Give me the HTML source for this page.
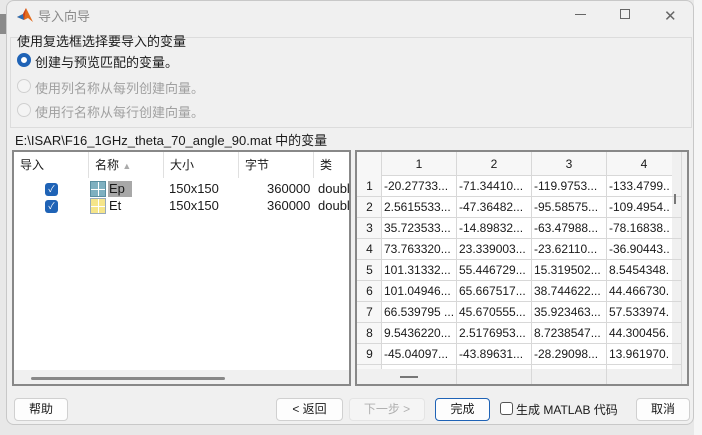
<!DOCTYPE html>
<html><head><meta charset="utf-8"><style>
*{box-sizing:border-box;margin:0;padding:0}
body{width:702px;height:435px;overflow:hidden;background:#e8e8e8;font-family:"Liberation Sans","Noto Sans CJK SC",sans-serif;font-size:12px;color:#1a1a1a;position:relative}
.a{position:absolute}
.win{left:6px;top:0;width:688px;height:425px;background:#f0f0f0;border:1px solid #c8c8c8;border-radius:8px}
.btn{position:absolute;top:398px;height:23px;background:#fdfdfd;border:1px solid #d0d0d0;border-radius:4px;text-align:center;line-height:21px;font-size:12px}
.th{position:absolute;top:0;height:26px;line-height:26px;border-right:1px solid #e0e0e0;padding-left:6px}
.cell{position:absolute;height:21px;line-height:20px;border-right:1px solid #d8d8d8;border-bottom:1px solid #d8d8d8;padding-left:2px;white-space:nowrap;overflow:hidden;font-size:12px}
.cb{position:absolute;width:13px;height:13px;background:#1f63b6;border-radius:3px;color:#fff;font-size:9px;text-align:center;line-height:13px}
.radio{position:absolute;left:17px;width:14px;height:14px;border-radius:50%;border:1px solid #d0d0d0;background:#f4f4f4}
.grid{background-image:linear-gradient(#fff,#fff),linear-gradient(#fff,#fff);background-size:1px 100%,100% 1px;background-position:7px 0,0 7px;background-repeat:no-repeat}
</style></head><body>
<div class="a" style="left:0;top:14px;width:6px;height:20px;background:#8a8a8a"></div>
<div class="a" style="left:694px;top:0;width:8px;height:435px;background:#f6f6f6"></div>
<div class="a win"></div>
<svg class="a" style="left:16px;top:6px" width="18" height="18" viewBox="0 0 18 18"><path d="M1 11 L7 8 L10 2 L17 16 L12 12 L8 14Z" fill="#e36a1b"/><path d="M1 11 L7 8 L8 14Z" fill="#2b6fb6"/><path d="M7 8 L10 2 L8 14Z" fill="#c8401a"/></svg>
<div class="a" style="left:38px;top:6px;font-size:13px;color:#8a8a8a">导入向导</div>
<div class="a" style="left:575px;top:14px;width:11px;height:1px;background:#666"></div>
<div class="a" style="left:620px;top:9px;width:10px;height:10px;border:1px solid #666"></div>
<div class="a" style="left:664px;top:7px;font-size:15px;color:#666">✕</div>
<div class="a" style="left:10px;top:37px;width:682px;height:91px;border:1px solid #dcdcdc"></div>
<div class="a" style="left:15px;top:31px;padding:0 2px;font-size:13px">使用复选框选择要导入的变量</div>
<div class="radio" style="top:53px;border:4px solid #1f63b6;background:#fff"></div>
<div class="a" style="left:35px;top:52px;font-size:13px">创建与预览匹配的变量。</div>
<div class="radio" style="top:79px"></div>
<div class="a" style="left:35px;top:78px;font-size:13px;color:#a0a0a0">使用列名称从每列创建向量。</div>
<div class="radio" style="top:103px"></div>
<div class="a" style="left:35px;top:102px;font-size:13px;color:#a0a0a0">使用行名称从每行创建向量。</div>
<div class="a" style="left:15px;top:130px;font-size:13px">E:\ISAR\F16_1GHz_theta_70_angle_90.mat 中的变量</div>
<!-- left panel -->
<div class="a" style="left:12px;top:150px;width:339px;height:236px;border:2px solid #888;background:#fff;overflow:hidden">
 <div class="th" style="left:0;width:75px">导入</div>
 <div class="th" style="left:75px;width:75px">名称 <span style="color:#aaa;font-size:9px">▲</span></div>
 <div class="th" style="left:150px;width:75px">大小</div>
 <div class="th" style="left:225px;width:75px">字节</div>
 <div class="th" style="left:300px;width:60px;border:0">类</div>
 <div class="cb" style="left:31px;top:31px">✓</div>
 <div class="cb" style="left:31px;top:48px">✓</div>
 <div class="a grid" style="left:76px;top:29px;width:16px;height:16px;background-color:#7fb0c0;border:1px solid #5a8ea0"></div>
 <div class="a grid" style="left:76px;top:46px;width:16px;height:16px;background-color:#f5e58a;border:1px solid #9ab"></div>
 <div class="a" style="left:94px;top:29px;width:24px;height:16px;background:#a8a8a8;line-height:16px;padding-left:1px;font-size:13px">Ep</div>
 <div class="a" style="left:95px;top:46px;line-height:16px;font-size:13px">Et</div>
 <div class="a" style="left:155px;top:29px;line-height:16px;font-size:13px">150x150</div>
 <div class="a" style="left:155px;top:46px;line-height:16px;font-size:13px">150x150</div>
 <div class="a" style="left:253px;top:29px;line-height:16px;font-size:13px">360000</div>
 <div class="a" style="left:253px;top:46px;line-height:16px;font-size:13px">360000</div>
 <div class="a" style="left:304px;top:29px;line-height:16px;font-size:13px">doubl</div>
 <div class="a" style="left:304px;top:46px;line-height:16px;font-size:13px">doubl</div>
 <div class="a" style="left:0;top:218px;width:339px;height:20px;background:#f0f0f0"></div>
 <div class="a" style="left:17px;top:225px;width:194px;height:3px;background:#888;border-radius:2px"></div>
</div>
<!-- right panel -->
<div class="a" style="left:355px;top:150px;width:334px;height:236px;border:2px solid #888;background:#f0f0f0;overflow:hidden">
 <div class="a" style="left:0;top:0;width:315px;height:217px;background:#fff"></div>
 <div class="a" style="left:0;top:0;width:315px;height:24px;background:#f7f7f7;border-bottom:1px solid #d8d8d8"></div>
 <div class="a" style="left:0;top:0;width:25px;height:217px;background:#f7f7f7;border-right:1px solid #d8d8d8"></div>
 <div id="t"></div>
 <div class="a" style="left:317px;top:42px;width:2px;height:10px;background:#777"></div>
 <div class="a" style="left:43px;top:224px;width:18px;height:2px;background:#777"></div>
</div>
<script>
var d=[["-20.27733...","-71.34410...","-119.9753...","-133.4799.."],["2.5615533...","-47.36482...","-95.58575...","-109.4954.."],["35.723533...","-14.89832...","-63.47988...","-78.16838.."],["73.763320...","23.339003...","-23.62110...","-36.90443.."],["101.31332...","55.446729...","15.319502...","8.5454348."],["101.04946...","65.667517...","38.744622...","44.466730."],["66.539795 ...","45.670555...","35.923463...","57.533974."],["9.5436220...","2.5176953...","8.7238547...","44.300456."],["-45.04097...","-43.89631...","-28.29098...","13.961970."]];
var h="";
for(var c=0;c<4;c++)h+='<div class="a" style="left:'+(25+c*75)+'px;top:0;width:75px;height:24px;line-height:24px;text-align:center;border-right:1px solid #d8d8d8">'+(c+1)+'</div>';
for(var r=0;r<10;r++){var y=24+r*21;
 h+='<div class="a" style="left:0;top:'+y+'px;width:25px;height:21px;line-height:21px;text-align:center;border-bottom:1px solid #d8d8d8">'+(r<9?r+1:"")+'</div>';
 for(var c=0;c<4;c++)h+='<div class="cell" style="left:'+(25+c*75)+'px;top:'+y+'px;width:75px">'+(r<9?d[r][c]:"")+'</div>';}
document.getElementById("t").innerHTML=h;
</script>
<div class="btn" style="left:14px;width:54px">帮助</div>
<div class="btn" style="left:276px;width:67px">&lt; 返回</div>
<div class="btn" style="left:349px;width:76px;background:#f5f5f5;color:#b0b0b0;border-color:#e4e4e4">下一步 &gt;</div>
<div class="btn" style="left:435px;width:55px;border-color:#1f63b6">完成</div>
<div class="a" style="left:500px;top:402px;width:13px;height:13px;border:1px solid #555;border-radius:3px;background:#fff"></div>
<div class="a" style="left:516px;top:401px;font-size:12px">生成 MATLAB 代码</div>
<div class="btn" style="left:636px;width:54px">取消</div>
</body></html>
